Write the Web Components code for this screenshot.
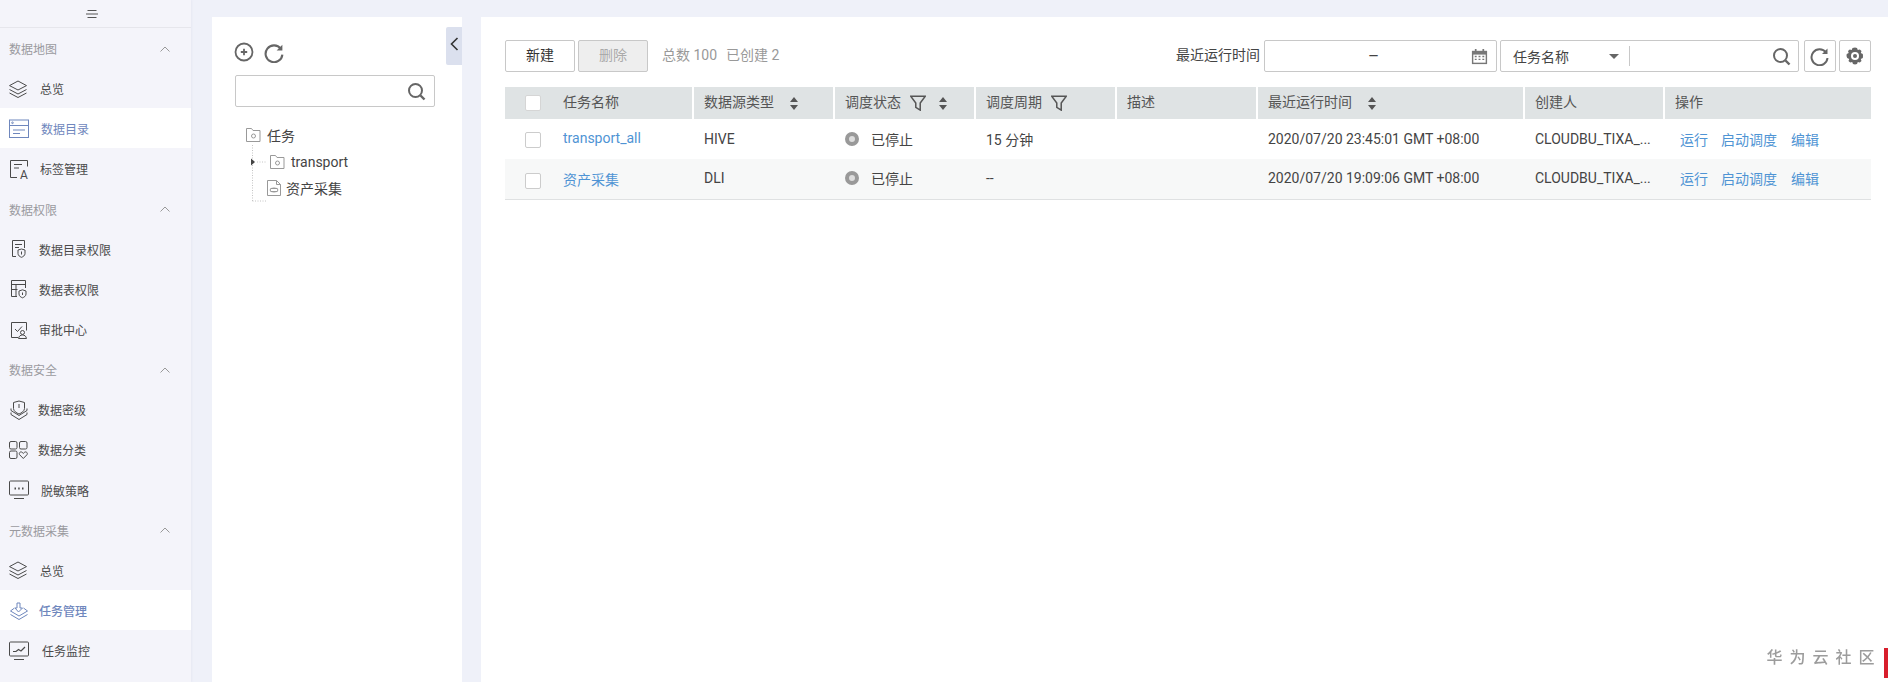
<!DOCTYPE html>
<html lang="zh">
<head>
<meta charset="utf-8">
<title>任务管理</title>
<style>
	html, body { margin: 0; height: 682px; overflow: hidden; }
	body {
		background: #eff1f9;
		font-family: Roboto, "Noto Sans CJK SC", sans-serif;
		font-size: 14px;
		color: #444;
	}
	#app { display: flex; height: 682px; }
</style>
</head>
<body>
<div id="app">
	<side-nav>
		<nav-group label="数据地图">
			<nav-item icon="layers" tx="40">总览</nav-item>
			<nav-item icon="catalog" tx="41" active>数据目录</nav-item>
			<nav-item icon="tag" tx="40">标签管理</nav-item>
		</nav-group>
		<nav-group label="数据权限">
			<nav-item icon="docShield" tx="39">数据目录权限</nav-item>
			<nav-item icon="tableShield" tx="39">数据表权限</nav-item>
			<nav-item icon="approve" tx="39">审批中心</nav-item>
		</nav-group>
		<nav-group label="数据安全">
			<nav-item icon="shieldLayers" tx="38">数据密级</nav-item>
			<nav-item icon="grid" tx="38">数据分类</nav-item>
			<nav-item icon="mask" tx="41">脱敏策略</nav-item>
		</nav-group>
		<nav-group label="元数据采集">
			<nav-item icon="layers" tx="40">总览</nav-item>
			<nav-item icon="taskLayers" tx="39" active strong>任务管理</nav-item>
			<nav-item icon="monitor" tx="42">任务监控</nav-item>
		</nav-group>
	</side-nav>
	<tree-panel></tree-panel>
	<task-panel></task-panel>
</div>
<brand-mark>华 为 云 社 区</brand-mark>

<script>
const ICONS = {
	layers: `<path d="M10 3l8.500 4.600L10 12 1.500 7.600z"/><path d="M1.500 11.500L10 16l8.500-4.500"/><path d="M1.500 15L10 19.500l8.500-4.500"/>`,
	catalog: `<rect x="1.500" y="2" width="19" height="17.500"/><path d="M1.500 7.500h19M5 12h12M5 15.500h7"/><circle cx="4.500" cy="4.800" r=".8"/>`,
	tag: `<path d="M19.500 8.500V2.500h-17v17H9M6 6.500h8M6 10h5"/><text x="12" y="20.500" font-size="12" stroke="none" fill="currentColor" font-family="Roboto, sans-serif">A</text>`,
	docShield: `<path d="M8 18.500H4.500v-16h12V10M7 6.500h7M7 9.500h4"/><path d="M10 12l3.500-1 3.500 1v3.500c0 2-1.800 3.200-3.500 3.800-1.700-.6-3.500-1.800-3.500-3.800z"/><path d="M13.500 13.500v3"/>`,
	tableShield: `<path d="M9 18.500H3.500v-16h14V10M3.500 6.500h14M3.500 11.500h6M8 6.500v12"/><path d="M11 13l3.500-1.200L18 13v3c0 2-1.800 3.200-3.500 3.800-1.700-.6-3.500-1.800-3.500-3.800z"/><path d="M14.500 14.500v2.500"/>`,
	approve: `<path d="M10 18.500H3.500v-15h15v8"/><path d="M7 10l2.500 2.500L14 7.500"/><circle cx="14.500" cy="13.500" r="2"/><path d="M10.500 19.500c.5-2.500 2-3.500 4-3.500s3.500 1 4 3.500z"/>`,
	shieldLayers: `<path d="M5.500 3.500L11 2l5.500 1.500v6c0 2.500-3 4.500-5.500 5.500-2.500-1-5.500-3-5.500-5.500z"/><path d="M11 5v4"/><path d="M3 9.500v2L11 16.500l8-5v-2M3 13.500v2l8 5 8-5v-2"/>`,
	grid: `<rect x="1.500" y="2.500" width="7.500" height="7.500" rx="1.500"/><rect x="11.500" y="2.500" width="7.500" height="7.500" rx="1.500"/><rect x="1.500" y="12" width="7.500" height="7.500" rx="1.500"/><path d="M15.300 19.500l-3.600-3.700c-1.400-1.700.9-3.900 2.500-2.400l1.100 1 1.100-1c1.600-1.500 3.900.7 2.500 2.400z"/>`,
	mask: `<rect x="1.500" y="2" width="19" height="14" rx="1"/><path d="M6 19.500h10"/><path d="M6.500 9.500h1.500M10.200 9.500h1.500M14 9.500h1.500" stroke-width="2"/>`,
	taskLayers: `<path d="M6.500 8L2.500 11 11 16l8.500-5-4-3"/><path d="M2.500 14.500L11 19.500l8.500-5"/><path d="M9 3h3v5h2.500L10.500 12 7 8h2z"/>`,
	monitor: `<rect x="1.500" y="2" width="19" height="14" rx="1"/><path d="M6 19.500h10"/><path d="M5 11.500h3l2.500-2 2.500 1.500 4-4" stroke-width="1.200"/>`,
	search: `<circle cx="9.500" cy="9.500" r="6.500" stroke-width="2"/><path d="M14.500 14.500l4 4" stroke-width="2.400"/>`,
	refresh: `<path d="M17 6.500A8 8 0 1 0 18.500 12" stroke-width="2"/><path d="M18.500 2.500v5.500H13z" fill="currentColor" stroke="none"/>`,
	add: `<circle cx="10" cy="10" r="8.500" stroke-width="1.800"/><path d="M10 6.800v6.400M6.800 10h6.400" stroke-width="1.800"/>`,
	gear: `<path d="M10 1.500l2 .5.8 2 2-.6 1.700 1.700-.7 2 2 .9.200 2-.200 2-2 .9.700 2-1.700 1.700-2-.7-.8 2-2 .5-2-.5-.8-2-2 .7-1.700-1.700.7-2-2-.9L1.500 10l.2-2 2-.9-.7-2 1.700-1.700 2 .6.800-2z" fill="currentColor" stroke="none"/><circle cx="10" cy="10" r="4" fill="#fff" stroke="none"/><circle cx="10" cy="10" r="2" fill="currentColor" stroke="none"/>`,
	calendar: `<path d="M2 4h16v14H2z" fill="currentColor" stroke="none"/><path d="M6 2v3M14 2v3" stroke-width="1.800"/><path d="M3.500 8h13v8.500h-13z" fill="#fff" stroke="none"/><path d="M5 10h2M9 10h2M13 10h2M5 13h2M9 13h2M13 13h2" stroke-width="1.500"/>`,
	funnel: `<path d="M1 1.500h16l-5.500 7.500v8l-5-3V9z" stroke-width="1.700"/>`,
	folder: `<path d="M.5.500h5l1.500 2h7v11H.5z"/><circle cx="7.500" cy="8" r="2"/>`,
	file: `<path d="M.5.500h9l4 4v11H.5zM9.500.500v4h4"/><ellipse cx="7" cy="10" rx="4" ry="2"/><path d="M3.500 8.500h7M3.500 11.500h7"/>`
};

function icon(name, size, viewBox) {
	return `<svg width="${size}" height="${size}" viewBox="${viewBox || "0 0 22 22"}" fill="none" stroke="currentColor" stroke-width="1">${ICONS[name]}</svg>`;
}

class SideNav extends HTMLElement {
	constructor() {
		super();
		this.attachShadow({ mode: "open" });
		this.shadowRoot.innerHTML = `
			<style>
				:host {
					display: block;
					flex: none;
					width: 191px;
					height: 682px;
					background: #f4f4fa;
					box-shadow: 1px 0 2px #e6e8f2;
					overflow: hidden;
				}
				.toggle {
					display: flex;
					align-items: center;
					justify-content: center;
					height: 27px;
					padding-right: 7px;
					border-bottom: 1px solid #e6e6ec;
					color: #555;
				}
			</style>
			<div class="toggle">
				<svg width="14" height="12" viewBox="0 0 14 12" stroke="currentColor" fill="none">
					<path d="M2.500 2.500h9M1 6h12M2.500 9.500h9"/>
				</svg>
			</div>
			<slot></slot>
		`;
	}
}

class NavGroup extends HTMLElement {
	constructor() {
		super();
		this.attachShadow({ mode: "open" });
		this.shadowRoot.innerHTML = `
			<style>
				:host { display: block; }
				.head {
					display: flex;
					align-items: center;
					justify-content: space-between;
					box-sizing: border-box;
					height: 40.150px;
					padding: 1px 21px 0 9px;
					font-size: 12px;
					color: #9a9a9f;
				}
			</style>
			<div class="head">
				<span>${this.getAttribute("label")}</span>
				<svg width="10" height="6" viewBox="0 0 10 6" fill="none" stroke="#999"><path d="M.5 5.500L5 1l4.500 4.500"/></svg>
			</div>
			<slot></slot>
		`;
	}
}

class NavItem extends HTMLElement {
	constructor() {
		super();
		this.attachShadow({ mode: "open" });
		const active = this.hasAttribute("active");
		const strong = this.hasAttribute("strong");
		const tx = +this.getAttribute("tx");
		this.shadowRoot.innerHTML = `
			<style>
				:host {
					display: flex;
					align-items: center;
					box-sizing: border-box;
					height: 40.150px;
					padding: 1px 0 0 8px;
					font-size: 12px;
					color: ${active ? "#6f87bd" : "#4a4a4a"};
					background: ${active ? "#fff" : "none"};
					font-weight: ${strong ? 500 : 400};
				}
				svg { flex: none; margin-right: ${tx - 30}px; }
			</style>
			${icon(this.getAttribute("icon"), 22)}
			<slot></slot>
		`;
	}
}

class TreePanel extends HTMLElement {
	constructor() {
		super();
		this.attachShadow({ mode: "open" });
		this.shadowRoot.innerHTML = `
			<style>
				:host {
					position: relative;
					display: block;
					flex: none;
					box-sizing: border-box;
					width: 250px;
					height: 665px;
					margin: 17px 19px 0 21px;
					padding: 25px 27px 0 23px;
					background: #fff;
					color: #555;
				}
				.tools {
					display: flex;
					align-items: center;
					gap: 10px;
					height: 20px;
					margin-left: -1px;
					color: #666;
				}
				.search {
					display: flex;
					align-items: center;
					justify-content: flex-end;
					box-sizing: border-box;
					height: 32px;
					margin-top: 13px;
					padding-right: 8px;
					border: 1px solid #c8c8c8;
					border-radius: 2px;
					color: #666;
				}
				.tree { margin-top: 15px; color: #444; }
				.row {
					display: flex;
					align-items: center;
					height: 26.500px;
				}
				.row svg { flex: none; color: #999; }
				.root { padding-left: 11px; }
				.root span { margin-left: 6px; }
				.branch { padding-left: 14px; }
				.branch .folder { margin: 0 6px 0 0; }
				.leaf { padding-left: 14px; }
				.leaf .doc { margin-right: 5px; }
				.collapse {
					position: absolute;
					top: 10px;
					right: 0;
					display: flex;
					justify-content: center;
					width: 16px;
					height: 38px;
					padding-top: 9px;
					box-sizing: border-box;
					background: #dbe0ee;
					border-radius: 2px 0 0 2px;
				}
			</style>
			<div class="tools">
				${icon("add", 20, "0 0 20 20")}
				${icon("refresh", 21, "1 0 20 20")}
			</div>
			<div class="search">${icon("search", 20, "0 0 20 20")}</div>
			<div class="tree">
				<div class="row root">
					<svg class="folder" width="15" height="14" viewBox="0 0 15 14" fill="none" stroke="currentColor">${ICONS.folder}</svg>
					<span>任务</span>
				</div>
				<div class="row branch">
					<svg width="20" height="26" viewBox="0 0 20 26" fill="none" style="overflow:visible">
						<path d="M3.500 -4v57M3.500 52h15M8 13h10" stroke="#c4c4c4" stroke-dasharray="1 1.500"/>
						<path d="M2 9.500l4 3.500-4 3.500z" fill="#444"/>
					</svg>
					<svg class="folder" width="15" height="14" viewBox="0 0 15 14" fill="none" stroke="currentColor" style="margin-left:1px">${ICONS.folder}</svg>
					<span>transport</span>
				</div>
				<div class="row leaf">
					<span style="width:18px"></span>
					<svg class="doc" width="14" height="16" viewBox="0 0 14 16" fill="none" stroke="currentColor">${ICONS.file}</svg>
					<span>资产采集</span>
				</div>
			</div>
			<div class="collapse">
				<svg width="9" height="16" viewBox="0 0 9 16" fill="none" stroke="#333" stroke-width="1.600"><path d="M7.500 2L1.500 8l6 6"/></svg>
			</div>
		`;
	}
}

class TaskToolbar extends HTMLElement {
	constructor() {
		super();
		this.attachShadow({ mode: "open" });
		this.shadowRoot.innerHTML = `
			<style>
				:host {
					display: flex;
					align-items: center;
					height: 32px;
					color: #444;
				}
				.box {
					display: flex;
					align-items: center;
					box-sizing: border-box;
					height: 32px;
					border: 1px solid #c8c8c8;
					border-radius: 2px;
					background: #fff;
				}
				button {
					box-sizing: border-box;
					width: 70px;
					height: 32px;
					margin-right: 3px;
					padding: 0 0 4px;
					border: 1px solid #c8c8c8;
					border-radius: 2px;
					background: #fff;
					font: inherit;
					color: #333;
				}
				button:disabled { background: #eeeeee; color: #aaa; }
				.count { margin: -4px 0 0 11px; color: #999; }
				.count span + span { margin-left: 9px; }
				.right { display: flex; align-items: center; margin-left: auto; }
				.label { margin-top: -4px; }
				.date {
					width: 233px;
					margin: 0 3px 0 4px;
					padding: 0 7px 0 0;
					justify-content: flex-end;
					color: #777;
				}
				.date i { flex: 1; text-align: center; font: 17px/1 Roboto, sans-serif; color: #444; padding-left: 12px; }
				.filter { width: 299px; }
				.filter .kind {
					display: flex;
					align-items: center;
					justify-content: space-between;
					box-sizing: border-box;
					width: 129px;
					height: 20px;
					padding: 0 10px 0 12px;
					border-right: 1px solid #c8c8c8;
				}
				.caret { border: 5px solid transparent; border-top-color: #666; border-bottom-width: 0; }
				.filter .go { margin-left: auto; margin-right: 7px; display: flex; color: #666; }
				.icon-btn {
					justify-content: center;
					width: 32px;
					margin-left: 5px;
					color: #666;
				}
				.icon-btn + .icon-btn { margin-left: 3px; }
			</style>
			<button>新建</button>
			<button disabled>删除</button>
			<div class="count"><span>总数 100</span><span>已创建 2</span></div>
			<div class="right">
				<span class="label">最近运行时间</span>
				<div class="box date"><i>–</i>${icon("calendar", 19, "0 0 20 20")}</div>
				<div class="box filter">
					<div class="kind">任务名称<span class="caret"></span></div>
					<div class="go">${icon("search", 20, "0 0 20 20")}</div>
				</div>
				<div class="box icon-btn">${icon("refresh", 20, "1 0 20 20")}</div>
				<div class="box icon-btn">${icon("gear", 20, "0 0 20 20")}</div>
			</div>
		`;
	}
}

class TaskTable extends HTMLElement {
	constructor() {
		super();
		this.attachShadow({ mode: "open" });
		this.tasks = [
			{ name: "transport_all", source: "HIVE", period: "15 分钟", time: "2020/07/20 23:45:01 GMT +08:00" },
			{ name: "资产采集", source: "DLI", period: "--", time: "2020/07/20 19:09:06 GMT +08:00" }
		];
		const sort = `<svg class="sort" width="8" height="13" viewBox="0 0 8 13" fill="#555"><path d="M4 0l4 5H0zM4 13l4-5H0z"/></svg>`;
		const filter = `<span class="funnel">${icon("funnel", 16, "0 0 18 18")}</span>`;
		const rows = this.tasks.map((task) => `
			<tr>
				<td class="first"><span class="check"></span><a>${task.name}</a></td>
				<td>${task.source}</td>
				<td><span class="status"><i></i>已停止</span></td>
				<td>${task.period}</td>
				<td></td>
				<td>${task.time}</td>
				<td>CLOUDBU_TIXA_...</td>
				<td class="ops"><a>运行</a><a>启动调度</a><a>编辑</a></td>
			</tr>
		`).join("");
		this.shadowRoot.innerHTML = `
			<style>
				:host { display: block; margin-top: 15px; color: #444; }
				table {
					width: 1366px;
					border-collapse: collapse;
					table-layout: fixed;
				}
				th {
					height: 32px;
					padding: 0 0 0 10px;
					box-sizing: border-box;
					background: #dfe3e4;
					border-left: 2px solid #fff;
					font-weight: 400;
					text-align: left;
					color: #555;
				}
				th:first-child { border-left: 0; }
				th > div { display: flex; align-items: center; line-height: 18px; margin-top: -2px; }
				th > div .sort, th > div .funnel, th > div .check { position: relative; top: 1px; }
				td {
					height: 40px;
					padding: 0 0 1px 11px;
					box-sizing: border-box;
					white-space: nowrap;
				}
				tr:nth-child(2) td { background: #f7f8f8; border-bottom: 1px solid #dfe1e2; }
				.check {
					display: inline-block;
					box-sizing: border-box;
					width: 16px;
					height: 16px;
					margin: 0 22px 0 20px;
					vertical-align: middle;
					background: #fff;
					border: 1px solid #ccc;
					border-radius: 2px;
				}
				td.first { padding: 0; }
				th.first { padding-left: 0; }
				th.first .check { border-color: #d5d5d5; }
				a { color: #4f94d4; text-decoration: none; }
				.sort { margin-left: 16px; }
				.funnel { display: inline-flex; margin-left: 9px; color: #555; }
				.funnel + .sort { margin-left: 13px; }
				.status { display: inline-flex; align-items: center; }
				.status i {
					box-sizing: border-box;
					width: 14px;
					height: 14px;
					margin-right: 12px;
					border: 4.500px solid #999;
					border-radius: 50%;
					background: #ddd;
				}
				td.ops { padding-left: 16px; }
				.ops a + a { margin-left: 13px; }
				.ops a:last-child { margin-left: 14px; }
			</style>
			<table>
				<colgroup>
					<col style="width:188px"><col style="width:141px"><col style="width:141px"><col style="width:141px">
					<col style="width:141px"><col style="width:267px"><col style="width:140px"><col style="width:207px">
				</colgroup>
				<thead>
					<tr>
						<th class="first"><div><span class="check"></span>任务名称</div></th>
						<th><div>数据源类型${sort}</div></th>
						<th><div>调度状态${filter}${sort}</div></th>
						<th><div>调度周期${filter}</div></th>
						<th><div>描述</div></th>
						<th><div>最近运行时间${sort}</div></th>
						<th><div>创建人</div></th>
						<th><div>操作</div></th>
					</tr>
				</thead>
				<tbody>${rows}</tbody>
			</table>
		`;
	}
}

class TaskPanel extends HTMLElement {
	constructor() {
		super();
		this.attachShadow({ mode: "open" });
		this.shadowRoot.innerHTML = `
			<style>
				:host {
					display: block;
					flex: 1;
					min-width: 0;
					box-sizing: border-box;
					height: 665px;
					margin-top: 17px;
					padding: 23px 17px 0 24px;
					background: #fff;
				}
			</style>
			<task-toolbar></task-toolbar>
			<task-table></task-table>
		`;
	}
}

class BrandMark extends HTMLElement {
	constructor() {
		super();
		this.attachShadow({ mode: "open" });
		this.shadowRoot.innerHTML = `
			<style>
				:host {
					position: fixed;
					right: 0;
					bottom: 4px;
					display: flex;
					align-items: center;
					height: 30px;
					font-size: 16px;
					font-weight: 500;
					color: #9c9c9c;
					letter-spacing: 1.500px;
				}
				.txt { margin-bottom: 14px; }
				.bar { width: 4px; height: 30px; margin-left: 8px; background: #d81e2c; }
			</style>
			<span class="txt"><slot></slot></span>
			<div class="bar"></div>
		`;
	}
}

customElements.define("nav-item", NavItem);
customElements.define("nav-group", NavGroup);
customElements.define("side-nav", SideNav);
customElements.define("tree-panel", TreePanel);
customElements.define("task-toolbar", TaskToolbar);
customElements.define("task-table", TaskTable);
customElements.define("task-panel", TaskPanel);
customElements.define("brand-mark", BrandMark);
</script>
</body>
</html>
